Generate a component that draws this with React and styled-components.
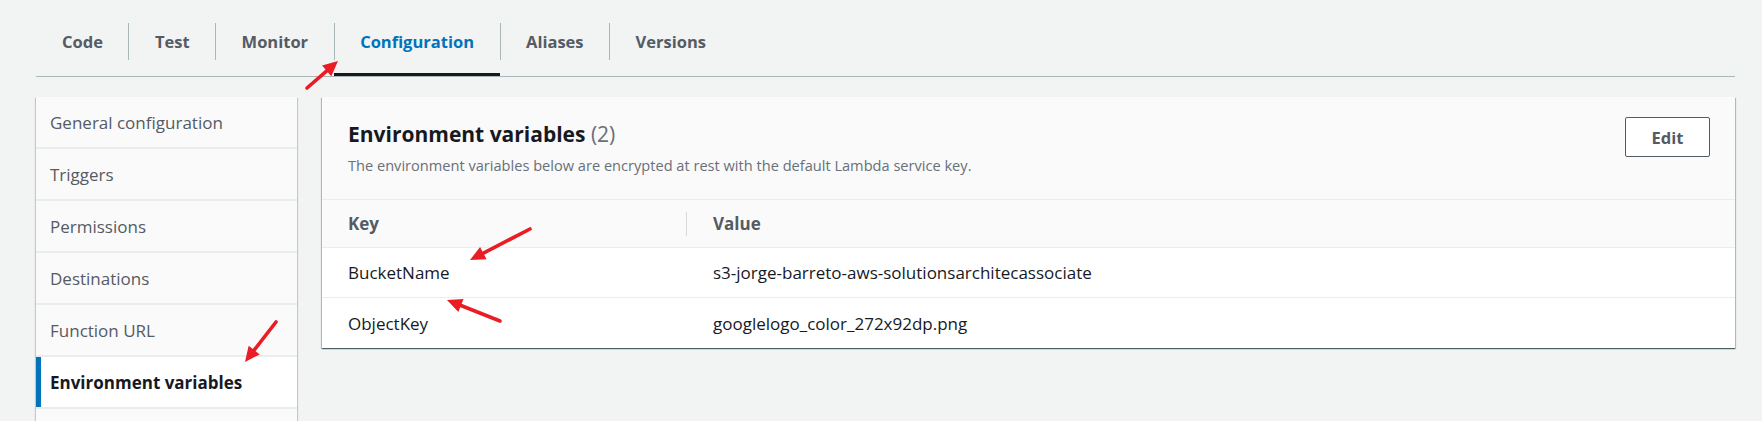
import React from 'react';
import styled, { createGlobalStyle } from 'styled-components';

const Global = createGlobalStyle`
  html, body { margin: 0; padding: 0; background: #f2f3f3; }
  body { font-family: "Open Sans", "Liberation Sans", sans-serif; color: #16191f; }
  * { box-sizing: border-box; }
`;

const Page = styled.div`
  position: relative;
  height: 421px;
  overflow: hidden;
  padding: 0 27px 0 36px;
  background: #f2f3f3;
`;

const TabList = styled.div`
  display: flex;
  height: 77px;
  border-bottom: 1px solid #aab7b8;
`;

const Tab = styled.div`
  height: 76px;
  padding: 23px 0 16px;
  box-shadow: ${p => (p.$active ? 'inset 0 -3px 0 #16191f' : 'none')};
`;

const TabLabel = styled.div`
  height: 37px;
  line-height: 37px;
  padding: 0 25.5px 0 ${p => (p.$first ? '26px' : '25.5px')};
  border-left: ${p => (p.$first ? 'none' : '1px solid #aab7b8')};
  font-size: 16.5px;
  font-weight: 700;
  color: ${p => (p.$active ? '#0073bb' : '#545b64')};
  white-space: nowrap;
`;

const Body = styled.div`
  display: flex;
  gap: 25px;
  margin-top: 20px;
  align-items: flex-start;
`;

const Sidebar = styled.nav`
  width: 261px;
  min-height: 360px;
  flex-shrink: 0;
  background: #fafafa;
  box-shadow: 0 1px 1px 0 rgba(0, 28, 36, 0.3), 1px 1px 1px 0 rgba(0, 28, 36, 0.15),
    -1px 1px 1px 0 rgba(0, 28, 36, 0.15);
`;

const NavItem = styled.div`
  height: 52px;
  display: flex;
  align-items: center;
  padding-left: 14px;
  border-bottom: 2px solid #eaeded;
  font-size: 17px;
  white-space: nowrap;
  background: ${p => (p.$active ? '#ffffff' : '#fafafa')};
  color: ${p => (p.$active ? '#16191f' : '#545b64')};
  font-weight: ${p => (p.$active ? 700 : 400)};
  box-shadow: ${p => (p.$active ? 'inset 5px 0 0 #0073bb' : 'none')};
`;

const Panel = styled.section`
  flex: 1;
  background: #ffffff;
  box-shadow: 0 1px 1px 0 rgba(0, 28, 36, 0.5), 1px 1px 1px 0 rgba(0, 28, 36, 0.2),
    -1px 1px 1px 0 rgba(0, 28, 36, 0.2);
`;

const PanelHeader = styled.header`
  height: 103px;
  display: flex;
  justify-content: space-between;
  align-items: flex-start;
  padding: 20px 25px 0 26px;
  background: #fafafa;
  border-bottom: 1px solid #eaeded;
`;

const TitleBlock = styled.div`
  padding-top: 3px;
`;

const Title = styled.h2`
  margin: 0;
  font-size: 21px;
  line-height: 28px;
  font-weight: 700;
  color: #16191f;
`;

const Count = styled.span`
  font-weight: 400;
  color: #687078;
`;

const Subtitle = styled.p`
  margin: 7px 0 0;
  font-size: 14.6px;
  line-height: 20px;
  color: #687078;
`;

const EditButton = styled.button`
  width: 85px;
  height: 40px;
  background: #ffffff;
  border: 1px solid #545b64;
  border-radius: 2px;
  font-family: inherit;
  font-size: 16.5px;
  font-weight: 700;
  color: #545b64;
  padding: 0;
`;

const Table = styled.div`
  display: grid;
  grid-template-columns: 364px 1fr;
`;

const HeadCell = styled.div`
  height: 48px;
  display: flex;
  align-items: center;
  background: #fafafa;
  border-bottom: 1px solid #eaeded;
  padding-left: ${p => (p.$first ? '26px' : '0')};
  font-size: 17px;
  font-weight: 700;
  color: #545b64;
`;

const HeadLabel = styled.span`
  line-height: 24px;
  padding-left: ${p => (p.$divider ? '26px' : '0')};
  border-left: ${p => (p.$divider ? '1px solid #d5dbdb' : 'none')};
`;

const Cell = styled.div`
  height: 50px;
  display: flex;
  align-items: center;
  padding-left: ${p => (p.$first ? '26px' : '27px')};
  border-bottom: ${p => (p.$last ? 'none' : '1px solid #eaeded')};
  font-size: 17px;
  color: #16191f;
  white-space: nowrap;
`;

const Overlay = styled.svg`
  position: absolute;
  left: 0;
  top: 0;
  pointer-events: none;
`;

function Arrow({ x1, y1, x2, y2 }) {
  const dx = x2 - x1;
  const dy = y2 - y1;
  const len = Math.hypot(dx, dy);
  const ux = dx / len;
  const uy = dy / len;
  const L = 15;
  const W = 7;
  const bx = x2 - ux * L;
  const by = y2 - uy * L;
  const px = -uy;
  const py = ux;
  const pts = `${x2},${y2} ${bx + px * W},${by + py * W} ${bx - px * W},${by - py * W}`;
  return (
    <g>
      <line x1={x1} y1={y1} x2={bx + ux * 2} y2={by + uy * 2} stroke="#ea1c24" strokeWidth="3.6" strokeLinecap="round" />
      <polygon points={pts} fill="#ea1c24" />
    </g>
  );
}

const tabs = ['Code', 'Test', 'Monitor', 'Configuration', 'Aliases', 'Versions'];
const navItems = [
  'General configuration',
  'Triggers',
  'Permissions',
  'Destinations',
  'Function URL',
  'Environment variables',
];
const rows = [
  { key: 'BucketName', value: 's3-jorge-barreto-aws-solutionsarchitecassociate' },
  { key: 'ObjectKey', value: 'googlelogo_color_272x92dp.png' },
];

export default function App() {
  return (
    <Page>
      <Global />
      <TabList>
        {tabs.map((t, i) => (
          <Tab key={t} $active={t === 'Configuration'}>
            <TabLabel $first={i === 0} $active={t === 'Configuration'}>
              {t}
            </TabLabel>
          </Tab>
        ))}
      </TabList>
      <Body>
        <Sidebar>
          {navItems.map(n => (
            <NavItem key={n} $active={n === 'Environment variables'}>
              {n}
            </NavItem>
          ))}
        </Sidebar>
        <Panel>
          <PanelHeader>
            <TitleBlock>
              <Title>
                Environment variables <Count>(2)</Count>
              </Title>
              <Subtitle>
                The environment variables below are encrypted at rest with the default Lambda service key.
              </Subtitle>
            </TitleBlock>
            <EditButton>Edit</EditButton>
          </PanelHeader>
          <Table>
            <HeadCell $first>
              <HeadLabel>Key</HeadLabel>
            </HeadCell>
            <HeadCell>
              <HeadLabel $divider>Value</HeadLabel>
            </HeadCell>
            {rows.map((r, i) => (
              <React.Fragment key={r.key}>
                <Cell $first $last={i === rows.length - 1}>
                  {r.key}
                </Cell>
                <Cell $last={i === rows.length - 1}>{r.value}</Cell>
              </React.Fragment>
            ))}
          </Table>
        </Panel>
      </Body>
      <Overlay width="1762" height="421" viewBox="0 0 1762 421">
        <Arrow x1={307} y1={88} x2={338} y2={61} />
        <Arrow x1={530} y1={229} x2={470} y2={260} />
        <Arrow x1={500} y1={321} x2={447} y2={300} />
        <Arrow x1={276} y1={322} x2={245} y2={362} />
      </Overlay>
    </Page>
  );
}
